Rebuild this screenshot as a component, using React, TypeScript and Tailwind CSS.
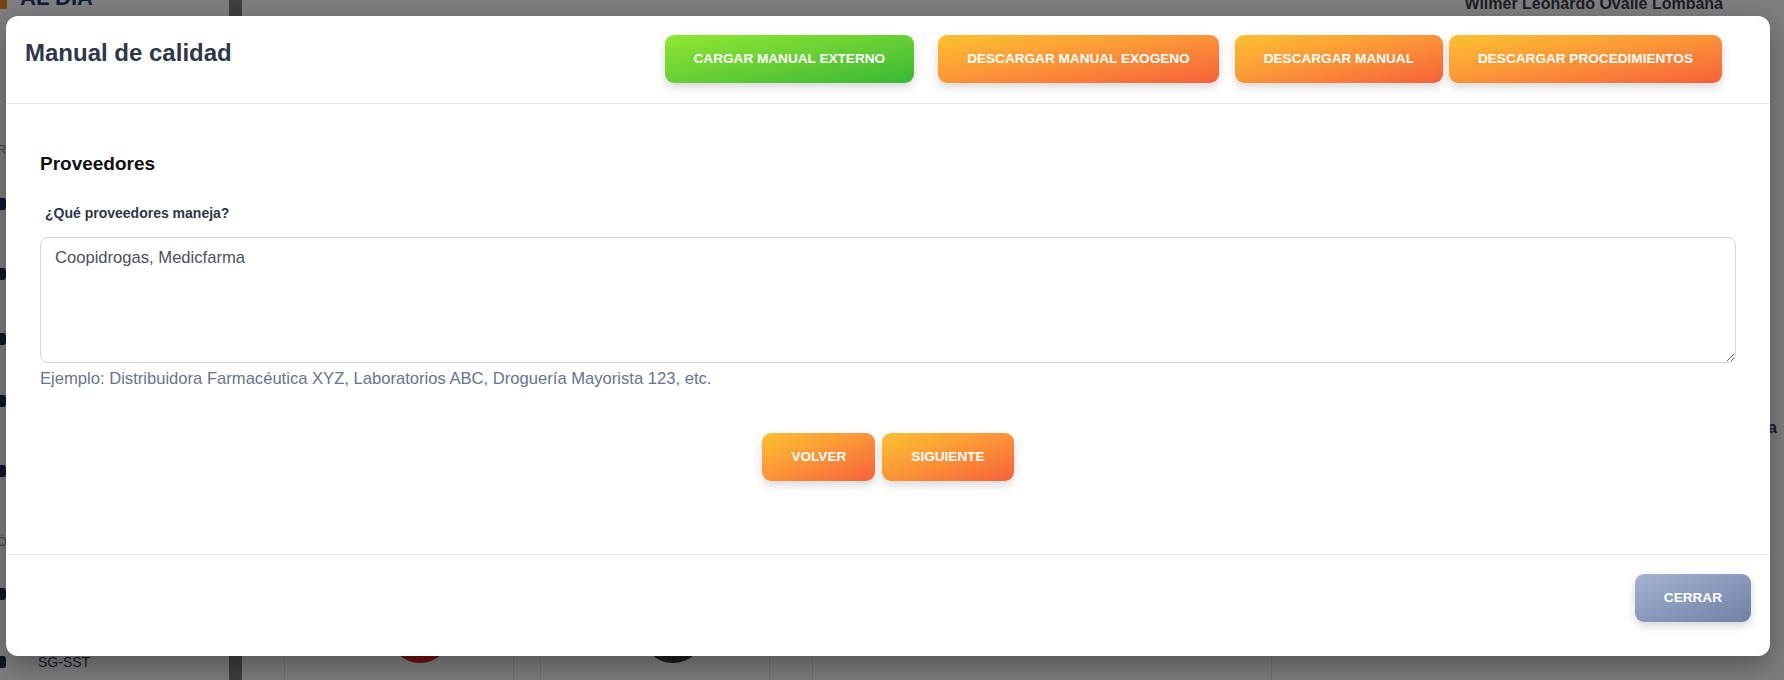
import React from "react";

function GradBtn({
  children,
  variant = "orange",
  className = "",
}: {
  children: React.ReactNode;
  variant?: "orange" | "green" | "gray";
  className?: string;
}) {
  const bg =
    variant === "green"
      ? "bg-linear-to-br from-[#90e731] to-[#36b835]"
      : variant === "gray"
      ? "bg-linear-to-br from-[#a4b3d2] to-[#6f81a5]"
      : "bg-linear-to-br from-[#fbc130] to-[#f65f3a]";
  return (
    <button
      type="button"
      className={`h-[48px] shrink-0 px-[29px] rounded-[9px] text-white font-bold text-[13.6px] uppercase whitespace-nowrap shadow-[0_4px_10px_rgba(0,0,0,0.16)] flex items-center justify-center ${bg} ${className}`}
    >
      {children}
    </button>
  );
}

function SideIcon() {
  return <div className="-ml-[8px] w-[14px] h-[12px] rounded-[3px] bg-[#1e2f5a]" />;
}

export default function App() {
  return (
    <div className="relative w-[1784px] h-[680px] overflow-hidden bg-white font-['Liberation_Sans',Arial,sans-serif]">
      {/* Background page */}
      <div className="flex h-full">
        <aside className="w-[229px] shrink-0 bg-white flex flex-col">
          <div className="flex items-end h-[21px] -mt-[12px]">
            <div className="w-[7px] h-[21px] bg-[#f08a24]" />
            <span className="ml-[13px] text-[22px] font-extrabold leading-none text-[#1e3a6e]">
              AL DÍA
            </span>
          </div>
          <div className="mt-[133px] w-[6px] overflow-hidden">
            <span className="block -ml-[3px] text-[13px] text-[#8a8f99] leading-[16px]">R</span>
          </div>
          <div className="mt-[40px]"><SideIcon /></div>
          <div className="mt-[58px]"><SideIcon /></div>
          <div className="mt-[53px]"><SideIcon /></div>
          <div className="mt-[50px]"><SideIcon /></div>
          <div className="mt-[58px]"><SideIcon /></div>
          <div className="mt-[57px] w-[6px] overflow-hidden">
            <span className="block -ml-[3px] text-[13px] text-[#8a8f99] leading-[16px]">Ó</span>
          </div>
          <div className="mt-[38px]"><SideIcon /></div>
          <div className="mt-auto mb-[8px] flex items-center h-[20px]">
            <SideIcon />
            <span className="ml-[32px] text-[14px] text-[#2a3550]">SG-SST</span>
          </div>
        </aside>
        <div className="w-[13px] shrink-0 bg-[#7e7e7e]" />
        <main className="flex-1 flex flex-col bg-white">
          <div className="flex justify-end pr-[61px] -mt-[8px]">
            <span className="text-[16px] font-bold leading-[24px] text-[#363c48]">
              Wilmer Leonardo Ovalle Lombana
            </span>
          </div>
          <div className="mt-[400px] flex justify-end pr-[7px]">
            <span className="text-[16px] font-bold leading-[24px] text-[#363c48]">Fecha de vigencia</span>
          </div>
          <div className="mt-auto -mb-[40px] flex pl-[42px]">
            <div className="w-[230px] h-[120px] border border-[#e6e6e6] rounded-lg bg-white">
              <div className="ml-[104px] w-[62px] h-[62px] rounded-full bg-[#d9262c]" />
            </div>
            <div className="ml-[26px] w-[230px] h-[120px] border border-[#e6e6e6] rounded-lg bg-white">
              <div className="ml-[101px] w-[62px] h-[62px] rounded-full bg-[#3a3a3a]" />
            </div>
            <div className="ml-[42px] w-[460px] h-[120px] border border-[#e6e6e6] rounded-lg bg-white" />
          </div>
        </main>
      </div>

      {/* Overlay */}
      <div className="absolute inset-0 bg-black/50" />

      {/* Modal */}
      <div className="absolute left-[6px] top-[16px] w-[1764px] bg-white rounded-xl shadow-[0_10px_30px_rgba(0,0,0,0.35)] flex flex-col">
        <div className="h-[88px] border-b border-[#e4e4e7] flex items-start pl-[19px] pr-[48px]">
          <h2 className="mt-[23px] text-[24px] leading-[1.15] font-bold text-[#2d3748]">Manual de calidad</h2>
          <div className="ml-auto mt-[19px] flex">
            <GradBtn variant="green">Cargar manual externo</GradBtn>
            <GradBtn className="ml-[24px]">Descargar manual exogeno</GradBtn>
            <GradBtn className="ml-[16px]">Descargar manual</GradBtn>
            <GradBtn className="ml-[6px]">Descargar procedimientos</GradBtn>
          </div>
        </div>

        <div className="px-[34px] pb-[73px]">
          <h3 className="mt-[48px] text-[19px] leading-[23px] font-bold text-[#111111]">Proveedores</h3>
          <label className="block mt-[28px] pl-[5px] text-[14px] leading-[21px] font-bold text-[#2d3748]">
            ¿Qué proveedores maneja?
          </label>
          <textarea
            readOnly
            defaultValue="Coopidrogas, Medicfarma"
            className="block mt-[13px] w-full h-[126px] border border-[#d4d6dc] rounded-lg px-[14px] pt-[8px] text-[16.6px] leading-[1.5] text-[#4a5260] outline-none"
          />
          <p className="mt-[4px] text-[16.6px] leading-[1.5] text-[#66758f]">
            Ejemplo: Distribuidora Farmacéutica XYZ, Laboratorios ABC, Droguería Mayorista 123, etc.
          </p>
          <div className="mt-[41px] flex justify-center gap-[7px]">
            <GradBtn>Volver</GradBtn>
            <GradBtn>Siguiente</GradBtn>
          </div>
        </div>

        <div className="border-t border-[#e2e0ea] flex justify-end pt-[19px] pb-[34px] pr-[19px]">
          <GradBtn variant="gray">Cerrar</GradBtn>
        </div>
      </div>
    </div>
  );
}
